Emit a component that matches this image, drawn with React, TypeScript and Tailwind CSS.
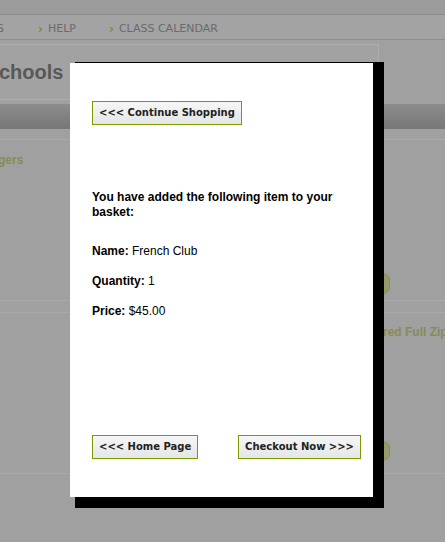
import React from "react";

const btn =
  "h-[24px] border border-[#7a9a00] bg-gradient-to-b from-[#f6f6f6] to-[#e4e7e7] px-[6px] text-[10px] font-bold text-[#222] font-['DejaVu_Sans',Verdana,sans-serif] leading-none";

function Backdrop() {
  return (
    <div className="flex h-full flex-col font-['Liberation_Sans',Arial,sans-serif]">
      <div className="h-[15px] border-b border-[#8c8c8c] bg-[#9b9b9b]" />
      <nav className="flex h-[25px] items-center border-b border-[#8e8e8e] bg-[#a3a3a3] pt-[3px] text-[11px] uppercase leading-none text-[#6b6b6b] font-['DejaVu_Sans',Verdana,sans-serif]">
        <span className="ml-[-3px]">s</span>
        <span className="ml-[34px] text-[12px] font-bold text-[#7d8a3a]">›</span>
        <span className="ml-[5px]">Help</span>
        <span className="ml-[33px] text-[12px] font-bold text-[#7d8a3a]">›</span>
        <span className="ml-[5px]">Class Calendar</span>
      </nav>
      <div className="mt-[4px] flex h-[56px] w-[379px] items-center border border-l-0 border-[#adadad] bg-[#a2a2a2]">
        <h1 className="ml-[-1px] text-[20px] font-bold text-[#585858]">chools</h1>
      </div>
      <div className="mt-[4px] h-[25px] bg-gradient-to-b from-[#8c8c8c] to-[#777777]" />
      <div className="mt-[10px] border-t border-[#aaaaaa] pt-[11px]">
        <p className="ml-[-2px] text-[12px] font-bold text-[#878c55]">gers</p>
      </div>
      <div className="relative mt-[99px] h-[20px]">
        <span className="absolute left-[376px] top-[5px] h-[21px] w-[14px] rounded-full border border-[#8a9148] bg-[#959a68]" />
      </div>
      <div className="mt-[12px] h-[13px] border-y border-[#aaaaaa]" />
      <p className="ml-[383px] mt-[10px] whitespace-nowrap text-[12px] font-bold text-[#878c55]">red Full Zip</p>
      <div className="relative mt-[100px] h-[20px]">
        <span className="absolute left-[376px] top-[0px] h-[20px] w-[14px] rounded-full border border-[#8a9148] bg-[#959a68]" />
      </div>
      <div className="mt-[12px] border-t border-[#aaaaaa]" />
    </div>
  );
}

function BasketModal() {
  return (
    <>
      <div className="absolute left-[75px] top-[62px] h-[446px] w-[309px] bg-black" />
      <div className="absolute left-[70px] top-[63px] flex h-[434px] w-[303px] flex-col bg-white px-[22px] pb-[38px] pt-[38px] text-[12px] leading-[15px] text-black font-['Liberation_Sans',Arial,sans-serif]">
        <div>
          <button className={btn}>&lt;&lt;&lt; Continue Shopping</button>
        </div>
        <p className="mt-[65px] w-[270px] font-bold">You have added the following item to your basket:</p>
        <p className="mt-[24px]">
          <b>Name:</b> French Club
        </p>
        <p className="mt-[15px]">
          <b>Quantity:</b> 1
        </p>
        <p className="mt-[15px]">
          <b>Price:</b> $45.00
        </p>
        <div className="mt-auto flex w-[269px] justify-between">
          <button className={btn}>&lt;&lt;&lt; Home Page</button>
          <button className={btn}>Checkout Now &gt;&gt;&gt;</button>
        </div>
      </div>
    </>
  );
}

export default function App() {
  return (
    <div className="relative h-[542px] w-[445px] overflow-hidden bg-[#a0a0a0]">
      <Backdrop />
      <BasketModal />
    </div>
  );
}
